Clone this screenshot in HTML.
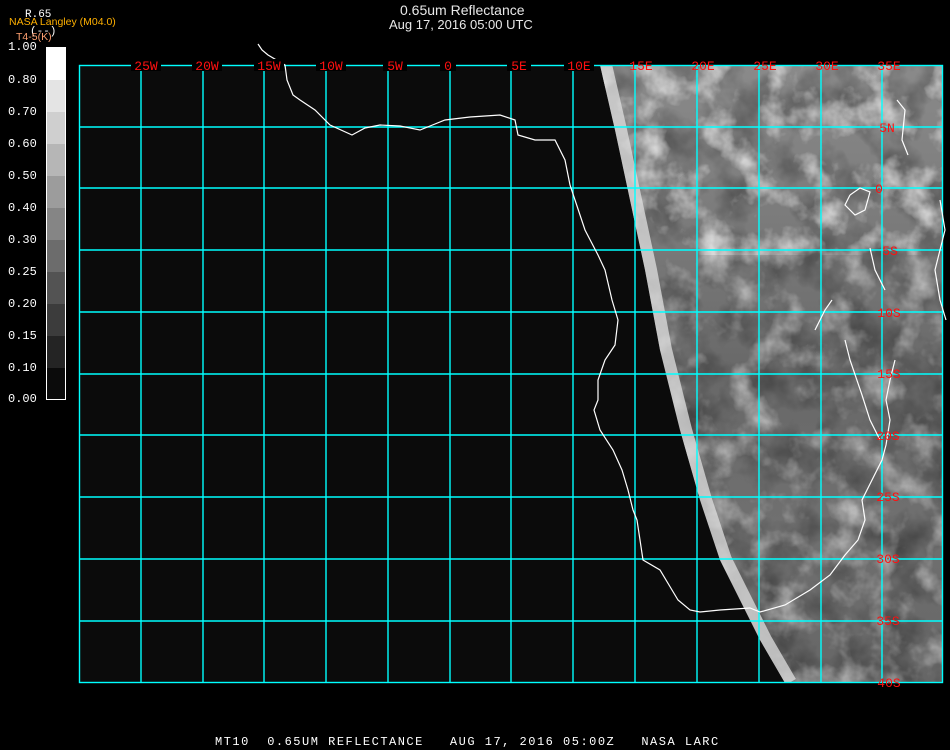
<!DOCTYPE html>
<html><head><meta charset="utf-8"><style>
html,body{margin:0;padding:0;background:#000;width:950px;height:750px;overflow:hidden}
body{position:relative;font-family:"Liberation Sans",sans-serif}
.t{position:absolute;color:#e8e8e8;font-size:14px;white-space:nowrap}
.m{position:absolute;color:#fff;font-family:"Liberation Mono",monospace;font-size:12px;white-space:pre}
</style></head><body>
<svg width="950" height="750" style="position:absolute;left:0;top:0">
<defs>
<filter id="n" x="0" y="0" width="100%" height="100%">
<feTurbulence type="fractalNoise" baseFrequency="0.025" numOctaves="4" seed="7"/>
<feColorMatrix type="matrix" values="0 0 0 0 0  0 0 0 0 0  0 0 0 0 0  1.3 0 0 0 -0.5"/>
</filter>
<filter id="n2" x="0" y="0" width="100%" height="100%">
<feTurbulence type="fractalNoise" baseFrequency="0.03" numOctaves="4" seed="3"/>
<feColorMatrix type="matrix" values="0 0 0 0 1  0 0 0 0 1  0 0 0 0 1  1.8 0 0 0 -0.85"/>
</filter>
<linearGradient id="g" x1="0" y1="0" x2="0" y2="1">
<stop offset="0" stop-color="#8a8a8a"/><stop offset="0.3" stop-color="#787878"/><stop offset="0.5" stop-color="#686868"/><stop offset="0.75" stop-color="#707070"/><stop offset="1" stop-color="#666"/>
</linearGradient>
<clipPath id="sat"><polygon points="600,65 943,65 943,683 785,683 760,640 740,600 720,560 700,500 680,430 660,350 645,270 630,200 615,130"/></clipPath>
</defs>
<rect x="79" y="65" width="864" height="618" fill="#0b0b0b"/>
<g clip-path="url(#sat)">
<rect x="580" y="65" width="370" height="618" fill="url(#g)"/>
<g opacity="0.55"><rect x="580" y="65" width="370" height="618" filter="url(#n)"/></g>
<g opacity="0.7"><rect x="580" y="65" width="370" height="618" filter="url(#n2)"/></g>
<g opacity="0.5"><rect x="580" y="65" width="370" height="190" filter="url(#n2)"/></g>
<polyline points="604,65 619,130 634,200 649,270 664,350 684,430 704,500 724,560 744,600 764,640 789,683" fill="none" stroke="#e0e0e0" stroke-width="16" opacity="0.75"/>
</g>
<g stroke="#00ffff" stroke-width="1.4" fill="none">
<rect x="79.5" y="65.5" width="863" height="617"/>
<path d="M141 65V683M203 65V683M264 65V683M326 65V683M388 65V683M450 65V683M511 65V683M573 65V683M635 65V683M697 65V683M759 65V683M821 65V683M882 65V683"/>
<path d="M79 127H943M79 188H943M79 250H943M79 312H943M79 374H943M79 435H943M79 497H943M79 559H943M79 621H943"/>
</g>
<g fill="none" stroke="#fff" stroke-width="1.2">
<polyline points="258,44 262,50 268,55 285,65 287,80 293,95 300,100 315,110 330,125 352,135 365,128 380,125 400,126 420,130 430,126 445,120 470,117 500,115 515,120 518,135 535,140 555,140 565,160 570,185 575,200 585,230 598,255 605,270 612,300 618,320 615,345 605,360 598,380 598,400 594,410 600,430 613,450 622,470 628,490 633,510 637,520 640,540 643,560 660,570 672,590 678,600 690,610 700,612 720,610 750,608 760,612 785,605 810,590 830,575 845,555 858,540 865,520 862,500 872,480 882,460 886,445 890,420 886,400 890,380 895,360"/>
<polyline points="832,300 825,310 820,320 815,330"/>
<polyline points="845,340 850,360 862,395 870,420 880,440"/>
<polyline points="870,248 875,270 885,290"/>
<polyline points="940,200 945,230 935,270 940,300 946,320"/>
<polyline points="850,195 860,188 870,192 865,210 855,215 845,205 850,195"/>
<polyline points="897,100 905,110 902,140 908,155"/>
</g>
<rect x="46.5" y="47.5" width="19" height="352" fill="#0b0b0b" stroke="#fff"/>
<rect x="47" y="48" width="18" height="32" fill="#fff"/>
<rect x="47" y="80" width="18" height="32" fill="#e4e4e4"/>
<rect x="47" y="112" width="18" height="32" fill="#cfcfcf"/>
<rect x="47" y="144" width="18" height="32" fill="#b6b6b6"/>
<rect x="47" y="176" width="18" height="32" fill="#9c9c9c"/>
<rect x="47" y="208" width="18" height="32" fill="#858585"/>
<rect x="47" y="240" width="18" height="32" fill="#6c6c6c"/>
<rect x="47" y="272" width="18" height="32" fill="#535353"/>
<rect x="47" y="304" width="18" height="32" fill="#3c3c3c"/>
<rect x="47" y="336" width="18" height="32" fill="#242424"/>
<g font-family="Liberation Mono,monospace" font-size="13" fill="#ff1010" text-anchor="middle">
<rect x="131" y="59" width="30" height="12" fill="#000"/><text x="146" y="70">25W</text>
<rect x="192" y="59" width="30" height="12" fill="#000"/><text x="207" y="70">20W</text>
<rect x="254" y="59" width="30" height="12" fill="#000"/><text x="269" y="70">15W</text>
<rect x="316" y="59" width="30" height="12" fill="#000"/><text x="331" y="70">10W</text>
<rect x="383" y="59" width="24" height="12" fill="#000"/><text x="395" y="70">5W</text>
<rect x="440" y="59" width="16" height="12" fill="#000"/><text x="448" y="70">0</text>
<rect x="507" y="59" width="24" height="12" fill="#000"/><text x="519" y="70">5E</text>
<rect x="564" y="59" width="30" height="12" fill="#000"/><text x="579" y="70">10E</text>
<text x="641" y="70">15E</text>
<text x="703" y="70">20E</text>
<text x="765" y="70">25E</text>
<text x="827" y="70">30E</text>
<text x="889" y="70">35E</text>
<text x="887" y="132">5N</text>
<text x="879" y="193">0</text>
<text x="890" y="255">5S</text>
<text x="889" y="317">10S</text>
<text x="889" y="378">15S</text>
<text x="888" y="440">20S</text>
<text x="888" y="501">25S</text>
<text x="888" y="563">30S</text>
<text x="888" y="625">35S</text>
<text x="889" y="687">40S</text>
</g>
</svg>
<div class="t" style="left:400px;top:2px">0.65um Reflectance</div>
<div class="t" style="left:389px;top:17px;font-size:13px">Aug 17, 2016 05:00 UTC</div>
<div class="m" style="left:25px;top:9px;font-size:11px">R.65</div>
<div class="m" style="left:30px;top:26px;font-size:11px">(--)</div>
<div class="t" style="left:9px;top:16px;font-size:10.5px;color:#ffb000">NASA Langley (M04.0)</div>
<div class="t" style="left:16px;top:31px;font-size:10.5px;color:#ffa070">T4-5(K)</div>
<div class="m" style="left:8px;top:40px">1.00</div>
<div class="m" style="left:8px;top:73px">0.80</div>
<div class="m" style="left:8px;top:105px">0.70</div>
<div class="m" style="left:8px;top:137px">0.60</div>
<div class="m" style="left:8px;top:169px">0.50</div>
<div class="m" style="left:8px;top:201px">0.40</div>
<div class="m" style="left:8px;top:233px">0.30</div>
<div class="m" style="left:8px;top:265px">0.25</div>
<div class="m" style="left:8px;top:297px">0.20</div>
<div class="m" style="left:8px;top:329px">0.15</div>
<div class="m" style="left:8px;top:361px">0.10</div>
<div class="m" style="left:8px;top:392px">0.00</div>
<div class="m" style="left:215px;top:735px;letter-spacing:1.5px">MT10  0.65UM REFLECTANCE   AUG 17, 2016 05:00Z   NASA LARC</div>
</body></html>
